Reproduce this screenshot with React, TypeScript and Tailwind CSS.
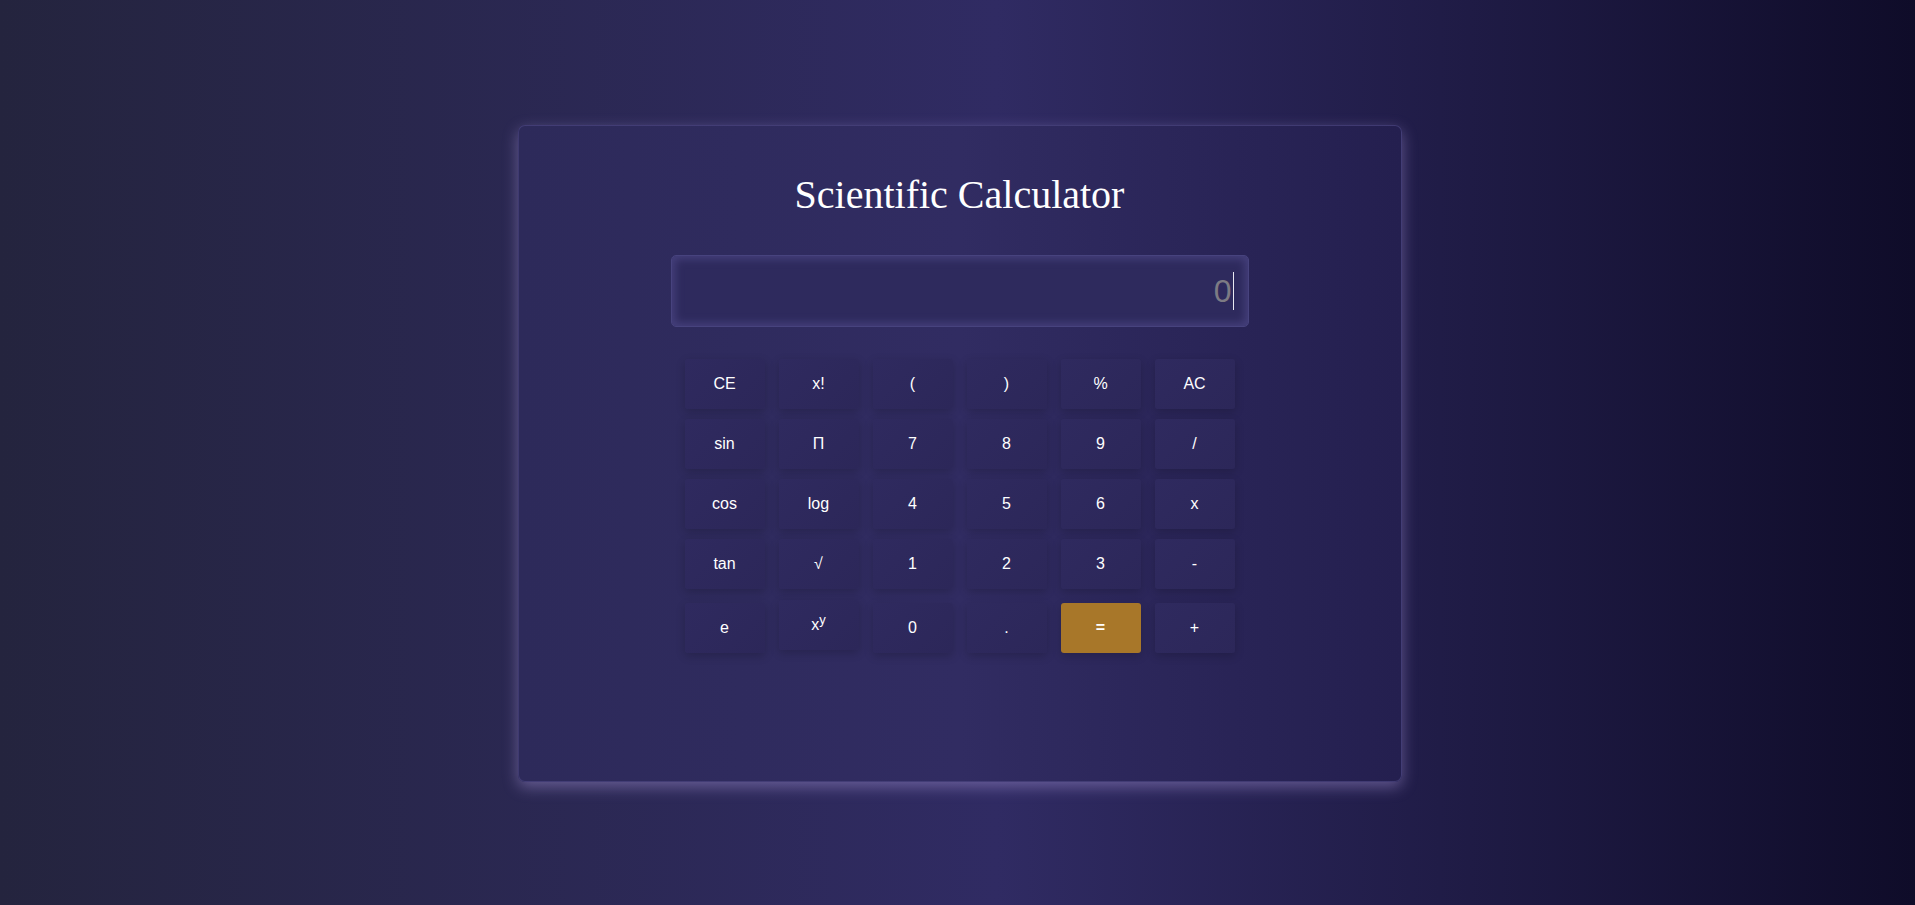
import React from "react";

const rows: string[][] = [
  ["CE", "x!", "(", ")", "%", "AC"],
  ["sin", "Π", "7", "8", "9", "/"],
  ["cos", "log", "4", "5", "6", "x"],
  ["tan", "√", "1", "2", "3", "-"],
  ["e", "xy", "0", ".", "=", "+"],
];

function Key({ label, last }: { label: string; last: boolean }) {
  const isEq = label === "=";
  const isPow = label === "xy";
  const base =
    "w-[80px] h-[50px] rounded-[3px] flex items-center justify-center text-white text-[16px] shadow-[0_3px_10px_rgba(0,0,0,0.18)]";
  const bg = isEq
    ? "bg-[#a87729] font-bold"
    : "bg-[linear-gradient(135deg,#2f2a5f,#2c2759)]";
  const offset = last ? (isPow ? "mt-[1px]" : "mt-[4px]") : "";
  return (
    <div className={`${base} ${bg} ${offset}`}>
      {isPow ? (
        <span>
          x<sup className="text-[13px]">y</sup>
        </span>
      ) : (
        label
      )}
    </div>
  );
}

export default function App() {
  return (
    <div
      className="min-h-screen w-full bg-[linear-gradient(to_right,#24243e,#302b63_52%,#0f0c29)] pt-[125px]"
      style={{ fontFamily: '"Liberation Sans", Arial, sans-serif' }}
    >
      <div className="mx-auto w-[884px] h-[657px] rounded-[7px] border border-[#4b4680]/70 bg-[linear-gradient(to_right,#2d2a5a,#312c62_50%,#241f4f)] shadow-[0_5px_15px_rgba(190,170,240,0.4)] flex flex-col items-center relative left-[2px]">
        <h1
          className="mt-[46px] text-white text-[40px] leading-[46px]"
          style={{ fontFamily: '"Liberation Serif", "Times New Roman", serif' }}
        >
          Scientific Calculator
        </h1>
        <div className="mt-[37px] w-[578px] h-[72px] rounded-[5px] border border-[#47437e] bg-[#2e2a5d] shadow-[inset_0_0_8px_3px_rgba(72,67,128,0.9)] flex items-center justify-end pr-[14px]">
          <span className="text-[32px] text-[#7d7b84] leading-[37px]">0</span>
          <span className="w-[1px] h-[38px] bg-[#e8e8f0] ml-[1px]" />
        </div>
        <div className="mt-[32px] grid grid-cols-6 gap-x-[14px] gap-y-[10px]">
          {rows.map((r, i) =>
            r.map((k) => <Key key={`${i}-${k}`} label={k} last={i === 4} />)
          )}
        </div>
      </div>
    </div>
  );
}
